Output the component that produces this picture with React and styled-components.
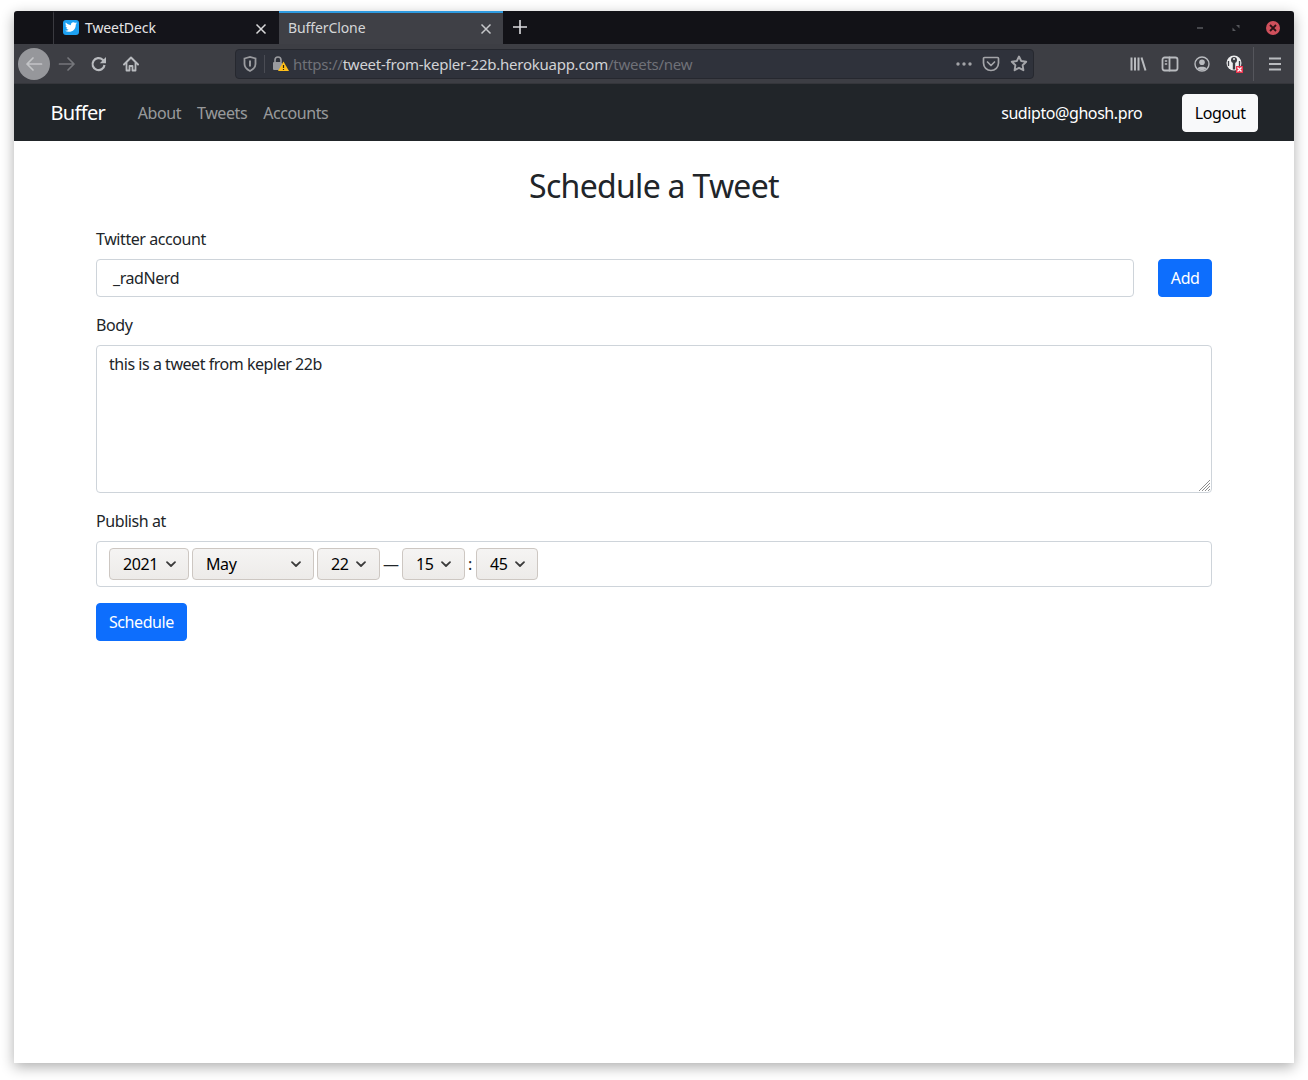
import React from 'react';
import styled, { createGlobalStyle } from 'styled-components';
import { FaTwitter } from 'react-icons/fa';

const GlobalStyle = createGlobalStyle`
  html, body { margin: 0; padding: 0; background: #fff; }
  body { font-family: "Noto Sans", sans-serif; color: #212529; letter-spacing: -0.42px; }
  * { box-sizing: border-box; }
`;

const Stage = styled.div`
  width: 1308px;
  height: 1080px;
  padding: 11px 14px 17px;
  overflow: hidden;
`;

const Window = styled.div`
  height: 100%;
  display: flex;
  flex-direction: column;
  background: #fff;
  border-radius: 3px 3px 0 0;
  box-shadow: 0 4px 14px rgba(0, 0, 0, 0.32);
`;

const TabStrip = styled.div`
  height: 33px;
  flex: none;
  display: flex;
  background: #121217;
  border-radius: 3px 3px 0 0;
  padding-left: 39px;
`;

const Tab = styled.div`
  width: ${(p) => p.$width}px;
  display: flex;
  align-items: center;
  gap: 6px;
  padding: 0 ${(p) => (p.$active ? 11 : 12)}px 0 9px;
  font-size: 14px;
  letter-spacing: -0.1px;
  color: ${(p) => (p.$active ? '#d5d6d8' : '#e4e4e6')};
  background: ${(p) => (p.$active ? '#3f4046' : '#14141a')};
  border-top: 2px solid ${(p) => (p.$active ? '#2f9be0' : '#14141a')};
  border-left: ${(p) => (p.$active ? '0' : '1px solid #3a3a40')};
`;

const TabTitle = styled.span`
  flex: 1;
  line-height: 1;
  margin-top: -2px;
`;

const TabIcon = styled.span`
  width: 16px;
  height: 15px;
  border-radius: 3px;
  background: #1da1f2;
  color: #fff;
  display: flex;
  align-items: center;
  justify-content: center;
  font-size: 12px;
  margin-top: -3px;
`;

const NewTab = styled.div`
  width: 34px;
  padding-bottom: 2px;
  display: flex;
  align-items: center;
  justify-content: center;
`;

const WindowControls = styled.div`
  margin-left: auto;
  display: flex;
  align-items: center;
  gap: 24px;
  padding-right: 14px;
`;

const CloseDot = styled.span`
  width: 14px;
  height: 14px;
  border-radius: 50%;
  background: #d0505c;
  display: flex;
  align-items: center;
  justify-content: center;
`;

const Toolbar = styled.div`
  height: 40px;
  flex: none;
  display: flex;
  align-items: center;
  background: #3d3e44;
  border-bottom: 1px solid #35363b;
  padding-left: 4px;
`;

const BackCircle = styled.div`
  width: 32px;
  height: 32px;
  margin-right: 1px;
  border-radius: 50%;
  background: #96979b;
  display: flex;
  align-items: center;
  justify-content: center;
  flex: none;
`;

const ToolButton = styled.div`
  width: 32px;
  height: 32px;
  flex: none;
  display: flex;
  align-items: center;
  justify-content: center;
`;

const UrlBar = styled.div`
  width: 799px;
  height: 30px;
  margin-left: 88px;
  flex: none;
  display: flex;
  align-items: center;
  background: #2f323b;
  border: 1px solid #26282f;
  border-radius: 4px;
  font-size: 15px;
  letter-spacing: -0.25px;
  white-space: nowrap;
`;

const ShieldBox = styled.div`
  width: 29px;
  height: 18px;
  display: flex;
  align-items: center;
  justify-content: center;
  border-right: 1px solid #4a4c54;
  flex: none;
`;

const LockBox = styled.div`
  width: 28px;
  padding-left: 7px;
  flex: none;
  display: flex;
  align-items: center;
`;

const UrlText = styled.div`
  flex: 1;
  color: #6f7178;
  b { font-weight: 400; color: #d2d3d6; }
`;

const UrlActions = styled.div`
  display: flex;
  align-items: center;
  gap: 10px;
  padding-right: 5px;
`;

const ToolRight = styled.div`
  margin-left: auto;
  height: 100%;
  display: flex;
  align-items: center;
  padding-right: 3px;
`;

const ToolDivider = styled.div`
  width: 1px;
  height: 34px;
  margin: 0 5px 0 3px;
  background: #55565c;
`;

const Navbar = styled.nav`
  height: 57px;
  flex: none;
  display: flex;
  align-items: center;
  background: #212529;
  padding: 0 36px 0 36.5px;
`;

const Brand = styled.a`
  font-size: 20px;
  letter-spacing: -0.66px;
  color: #fff;
  margin-right: 32.5px;
`;

const NavLink = styled.a`
  font-size: 16px;
  color: rgba(255, 255, 255, 0.55);
  margin-right: 16px;
`;

const NavUser = styled.span`
  margin-left: auto;
  font-size: 16px;
  color: #fff;
  margin-right: 40px;
`;

const LightButton = styled.button`
  height: 38px;
  padding: 0 11.5px;
  font: 400 16px "Noto Sans", sans-serif;
  letter-spacing: -0.42px;
  color: #000;
  background: #f8f9fa;
  border: 1px solid #f8f9fa;
  border-radius: 4px;
`;

const Container = styled.main`
  width: 1140px;
  margin: 0 auto;
  padding: 0 12px;
`;

const Title = styled.h2`
  margin: 24px 0 0;
  height: 42px;
  font-size: 32px;
  font-weight: 400;
  letter-spacing: -0.7px;
  line-height: 42px;
  text-align: center;
  color: #212529;
`;

const Label = styled.label`
  display: block;
  font-size: 16px;
  line-height: 24px;
  margin-bottom: 8px;
  color: #212529;
`;

const Field = styled.div`
  margin-bottom: 16px;
`;

const FirstField = styled(Field)`
  padding-top: 20px;
`;

const AccountRow = styled.div`
  display: flex;
  gap: 24px;
`;

const AccountBox = styled.div`
  flex: 1;
  height: 38px;
  display: flex;
  align-items: center;
  padding: 0 16px;
  font-size: 16px;
  color: #212529;
  background: #fff;
  border: 1px solid #ced4da;
  border-radius: 4px;
`;

const PrimaryButton = styled.button`
  height: 38px;
  padding: 0 ${(p) => p.$pad || 12}px;
  font: 400 16px "Noto Sans", sans-serif;
  letter-spacing: -0.42px;
  color: #fff;
  background: #0d6efd;
  border: 1px solid #0d6efd;
  border-radius: 4px;
`;

const BodyWrap = styled.div`
  position: relative;
`;

const BodyArea = styled.textarea`
  display: block;
  width: 100%;
  height: 148px;
  padding: 6px 12px;
  font: 400 16px/24px "Noto Sans", sans-serif;
  letter-spacing: -0.46px;
  color: #212529;
  background: #fff;
  border: 1px solid #ced4da;
  border-radius: 4px;
  resize: none;
  outline: none;
`;

const ResizeGrip = styled.svg`
  position: absolute;
  right: 1px;
  bottom: 1px;
`;

const PublishBox = styled.div`
  height: 46px;
  display: flex;
  align-items: center;
  padding: 0 12px;
  font-size: 16px;
  background: #fff;
  border: 1px solid #ced4da;
  border-radius: 4px;
`;

const Select = styled.div`
  width: ${(p) => p.$width}px;
  height: 32px;
  flex: none;
  display: flex;
  align-items: center;
  justify-content: space-between;
  padding: 0 ${(p) => p.$right || 11}px 0 13px;
  margin-right: ${(p) => p.$gap ?? 3}px;
  font-size: 16px;
  color: #000;
  background: linear-gradient(#f5f4f3, #edebe9);
  border: 1px solid #cdc7c2;
  border-radius: 4px;
`;

const Separator = styled.span`
  width: ${(p) => p.$width}px;
  flex: none;
  margin-right: 3px;
  color: #212529;
`;

const Chevron = () => (
  <svg width="12" height="12" viewBox="0 0 12 12" fill="none" stroke="#3a3a3a" strokeWidth="1.8" strokeLinecap="round" strokeLinejoin="round">
    <path d="M2 4.2 6 8l4-3.8" />
  </svg>
);

const Ico = ({ w = 18, h = 18, children }) => (
  <svg width={w} height={h} viewBox={`0 0 ${w} ${h}`} fill="none" stroke="#b9bbbf" strokeWidth="1.8" strokeLinecap="round" strokeLinejoin="round">
    {children}
  </svg>
);

const CloseX = ({ color }) => (
  <svg width="12" height="12" viewBox="0 0 12 12" fill="none" stroke={color} strokeWidth="1.5">
    <path d="M1.5 1.5l9 9M10.5 1.5l-9 9" />
  </svg>
);

const App = () => (
  <>
    <GlobalStyle />
    <Stage>
      <Window>
        <TabStrip>
          <Tab $width={226}>
            <TabIcon><FaTwitter /></TabIcon>
            <TabTitle>TweetDeck</TabTitle>
            <CloseX color="#d8d8da" />
          </Tab>
          <Tab $width={224} $active>
            <TabTitle>BufferClone</TabTitle>
            <CloseX color="#c6c7ca" />
          </Tab>
          <NewTab>
            <svg width="14" height="14" viewBox="0 0 14 14" stroke="#dcdce0" strokeWidth="1.6">
              <path d="M7 0v14M0 7h14" />
            </svg>
          </NewTab>
          <WindowControls>
            <svg width="12" height="12" viewBox="0 0 12 12"><path d="M3 6h6" stroke="#55565b" strokeWidth="1.6" /></svg>
            <svg width="12" height="12" viewBox="0 0 12 12" fill="#55565b"><path d="M6 3h3.5v3.5zM6 9H2.5V5.500z" /></svg>
            <CloseDot>
              <svg width="8" height="8" viewBox="0 0 8 8" stroke="#2a1216" strokeWidth="1.8"><path d="M1 1l6 6M7 1 1 7" /></svg>
            </CloseDot>
          </WindowControls>
        </TabStrip>

        <Toolbar>
          <BackCircle>
            <svg width="18" height="16" viewBox="0 0 18 16" fill="none" stroke="#c3c4c7" strokeWidth="1.7" strokeLinecap="round" strokeLinejoin="round">
              <path d="M16.500 8H2M8 2 2 8l6 6" />
            </svg>
          </BackCircle>
          <ToolButton>
            <svg width="18" height="16" viewBox="0 0 18 16" fill="none" stroke="#75767b" strokeWidth="1.7" strokeLinecap="round" strokeLinejoin="round">
              <path d="M1.500 8H16M10 2l6 6-6 6" />
            </svg>
          </ToolButton>
          <ToolButton>
            <Ico>
              <path d="M14.500 10a6 6 0 1 1-1.800-5.200L14.500 6.500" strokeWidth="2.200" strokeLinecap="butt" />
              <path d="M16 2v6.200H9.800z" fill="#b9bbbf" stroke="none" />
            </Ico>
          </ToolButton>
          <ToolButton>
            <Ico>
              <path d="M2 9.500 9 2.500l7 7" strokeWidth="2" />
              <path d="M4.500 8v7.500h3V11h3v4.500h3V8" strokeWidth="1.800" />
            </Ico>
          </ToolButton>
          <UrlBar>
            <ShieldBox>
              <svg width="14" height="16" viewBox="0 0 14 16" fill="none">
                <path d="M1.500 2.500 7 1l5.500 1.500V8c0 3.500-2.500 5.500-5.500 7C4 13.500 1.500 11.500 1.500 8z" stroke="#9a9b9f" strokeWidth="1.800" />
                <path d="M6 4.500h2v6H6z" fill="#9a9b9f" />
              </svg>
            </ShieldBox>
            <LockBox>
              <svg width="17" height="17" viewBox="0 0 17 17" fill="none">
                <path d="M3 7V5a3 3 0 0 1 6 0v2" stroke="#9a9b9f" strokeWidth="1.600" />
                <rect x="1" y="7" width="9" height="8" rx="1" fill="#9a9b9f" />
                <path d="M11.500 6.500 17 16H6z" fill="#ffbf19" />
                <path d="M11.500 10v3M11.500 14v1" stroke="#30230a" strokeWidth="1.200" />
              </svg>
            </LockBox>
            <UrlText>https://<b>tweet-from-kepler-22b.herokuapp.com</b>/tweets/new</UrlText>
            <UrlActions>
              <svg width="16" height="4" viewBox="0 0 16 4" fill="#a2a3a7">
                <circle cx="2" cy="2" r="1.700" /><circle cx="8" cy="2" r="1.700" /><circle cx="14" cy="2" r="1.700" />
              </svg>
              <svg width="18" height="16" viewBox="0 0 18 16" fill="none" stroke="#a4a5a9" strokeWidth="1.700" strokeLinecap="round" strokeLinejoin="round">
                <path d="M2.500 1.500h13a1 1 0 0 1 1 1V7a7.500 7.500 0 0 1-15 0V2.500a1 1 0 0 1 1-1z" />
                <path d="M5.500 6 9 9.500 12.500 6" />
              </svg>
              <svg width="18" height="17" viewBox="0 0 18 17" fill="none" stroke="#a4a5a9" strokeWidth="1.900" strokeLinejoin="round">
                <path d="M9 1.500 11.200 6l5 .7-3.600 3.500.8 5L9 12.800l-4.400 2.400.8-5L1.800 6.700l5-.7z" />
              </svg>
            </UrlActions>
          </UrlBar>
          <ToolRight>
            <ToolButton>
              <Ico>
                <path d="M2.500 2.500v13M6 2.500v13M9.500 2.500v13M12.500 2.500l4 13" strokeWidth="2" strokeLinecap="butt" />
              </Ico>
            </ToolButton>
            <ToolButton>
              <Ico>
                <rect x="1.500" y="2.500" width="15" height="13" rx="2.200" />
                <path d="M8.500 2.500v13" />
                <path d="M3.800 6h2.400M3.800 9h2.400" strokeWidth="1.300" strokeLinecap="butt" />
              </Ico>
            </ToolButton>
            <ToolButton>
              <Ico>
                <circle cx="9" cy="9" r="7" strokeWidth="1.400" />
                <circle cx="9" cy="7.300" r="2.800" fill="#b9bbbf" stroke="none" />
                <path d="M4.300 13.500c.8-2.500 8.600-2.500 9.400 0-2.600 2-6.800 2-9.400 0z" fill="#b9bbbf" stroke="none" />
              </Ico>
            </ToolButton>
            <ToolButton>
              <svg width="18" height="18" viewBox="-1 0 18 18" fill="none">
                <circle cx="8" cy="8" r="7.500" fill="#eeeeef" />
                <circle cx="8" cy="5" r="3" fill="#3d3e44" />
                <circle cx="8" cy="4" r="1" fill="#eeeeef" />
                <path d="M8 7v7.500" stroke="#3d3e44" strokeWidth="2.400" />
                <path d="M2.500 6v5M13.500 6v5" stroke="#3d3e44" strokeWidth="1.300" />
                <rect x="10" y="11" width="7" height="7" fill="#e8344e" />
                <path d="M11.500 12.500l4 4M15.500 12.500l-4 4" stroke="#fff" strokeWidth="1.200" />
              </svg>
            </ToolButton>
            <ToolDivider />
            <ToolButton>
              <Ico>
                <path d="M3 3.500h12M3 9h12M3 14.500h12" strokeWidth="2" strokeLinecap="butt" />
              </Ico>
            </ToolButton>
          </ToolRight>
        </Toolbar>

        <Navbar>
          <Brand>Buffer</Brand>
          <NavLink>About</NavLink>
          <NavLink>Tweets</NavLink>
          <NavLink>Accounts</NavLink>
          <NavUser>sudipto@ghosh.pro</NavUser>
          <LightButton>Logout</LightButton>
        </Navbar>

        <Container>
          <Title>Schedule a Tweet</Title>
          <FirstField>
            <Label>Twitter account</Label>
            <AccountRow>
              <AccountBox>_radNerd</AccountBox>
              <PrimaryButton $pad={11.5}>Add</PrimaryButton>
            </AccountRow>
          </FirstField>
          <Field>
            <Label>Body</Label>
            <BodyWrap>
              <BodyArea readOnly value="this is a tweet from kepler 22b" />
              <ResizeGrip width="13" height="13" viewBox="0 0 13 13" stroke="#8f8f8f" strokeWidth="1">
                <path d="M1 12 12 1M4 12l8-8M7 12l5-5M10 12l2-2" />
              </ResizeGrip>
            </BodyWrap>
          </Field>
          <Field>
            <Label>Publish at</Label>
            <PublishBox>
              <Select $width={80}>2021 <Chevron /></Select>
              <Select $width={122}>May <Chevron /></Select>
              <Select $width={63} $right={12}>22 <Chevron /></Select>
              <Separator $width={16}>—</Separator>
              <Select $width={63} $right={12}>15 <Chevron /></Select>
              <Separator $width={5}>:</Separator>
              <Select $width={62} $right={11} $gap={0}>45 <Chevron /></Select>
            </PublishBox>
          </Field>
          <PrimaryButton>Schedule</PrimaryButton>
        </Container>
      </Window>
    </Stage>
  </>
);

export default App;
